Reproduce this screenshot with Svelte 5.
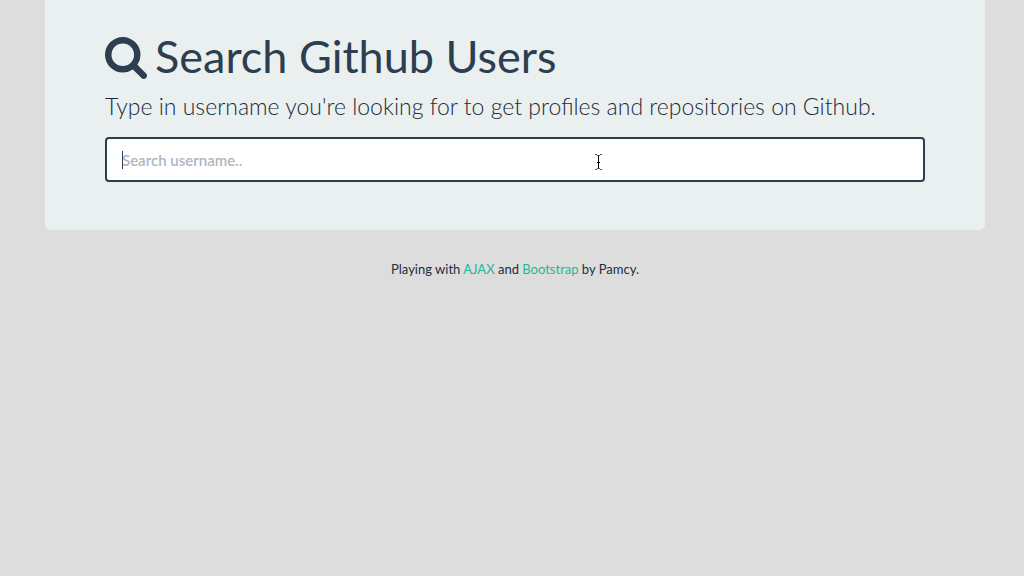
<script>
  let username = $state('');
  let field;
  $effect(() => field.focus());
</script>

<div class="container">
  <main class="jumbotron">
    <h1>
      <svg class="search-icon" viewBox="0 0 1664 1664" aria-hidden="true">
        <path d="M1152 704q0-185-131.500-316.500T704 256 387.500 387.500 256 704t131.500 316.500T704 1152t316.500-131.500T1152 704zm512 832q0 52-38 90t-90 38q-54 0-90-38l-343-342q-179 124-399 124-143 0-273.500-55.500t-225-150-150-225T0 704t55.500-273.500 150-225 225-150T704 0t273.500 55.500 225 150 150 225T1408 704q0 220-124 399l343 343q37 37 37 90z" />
      </svg>
      <label for="username">Search Github Users</label>
    </h1>
    <p class="lead">Type in username you're looking for to get profiles and repositories on Github.</p>
    <div class="field">
      <input id="username" type="text" placeholder="Search username.." bind:value={username} bind:this={field} autocomplete="off" />
      {#if !username}
        <span class="caret" aria-hidden="true"></span>
      {/if}
      <svg class="pointer" viewBox="0 0 7 16" aria-hidden="true">
        <path class="serif" d="M0 .5h2M5 .5h2M2 1.500h3M2 14.500h3M0 15.500h2M5 15.500h2" />
        <path d="M3.500 2v12M2 8.500h3" />
      </svg>
    </div>
  </main>
  <footer>Playing with <a href="#ajax">AJAX</a> and <a href="#bootstrap">Bootstrap</a> by Pamcy.</footer>
</div>

<style>
  :global(body) {
    background: #ddd;
    color: #2c3e50;
    font-family: Lato, "Liberation Sans", sans-serif;
  }
  .container {
    max-width: 940px;
    margin: 0 39px 0 45px;
  }
  .jumbotron {
    padding: 31px 60px 48px;
    background: #eaf0f0;
    border-radius: 0 0 6px 6px;
  }
  h1 {
    display: flex;
    align-items: flex-end;
    gap: 8px;
    margin: 0;
    font-size: 45px;
    font-weight: 400;
    line-height: 50px;
  }
  .search-icon {
    width: 42px;
    height: 42px;
    margin-bottom: 2px;
    fill: currentColor;
  }
  .lead {
    margin: 9px 0 14px;
    color: #1b2b3b;
    font-size: 23px;
    font-weight: 300;
    line-height: 33px;
  }
  .field {
    position: relative;
  }
  input {
    display: block;
    box-sizing: border-box;
    width: 100%;
    height: 45px;
    padding: 10px 15px;
    border: 2px solid #2c3e50;
    border-radius: 4px;
    outline: none;
    background: #fff;
    color: #2c3e50;
    caret-color: #2c3e50;
    font: 400 15px/21px Lato, "Liberation Sans", sans-serif;
  }
  input:placeholder-shown {
    caret-color: transparent;
  }
  input::placeholder {
    color: #acb6c0;
    font-weight: 600;
    opacity: 1;
  }
  .caret {
    position: absolute;
    top: 14px;
    left: 17px;
    width: 1px;
    height: 18px;
    background: #2c3e50;
    pointer-events: none;
  }
  .pointer {
    position: absolute;
    top: 17px;
    left: calc(60% - 2px);
    width: 7px;
    height: 16px;
    fill: none;
    stroke: #000;
    pointer-events: none;
  }
  .serif {
    stroke: #555;
  }
  footer {
    padding: 29px 0;
    text-align: center;
    font-size: 13px;
    line-height: 20px;
    color: #1f2d3b;
  }
  a {
    color: #1eb894;
    text-decoration: none;
  }
</style>
